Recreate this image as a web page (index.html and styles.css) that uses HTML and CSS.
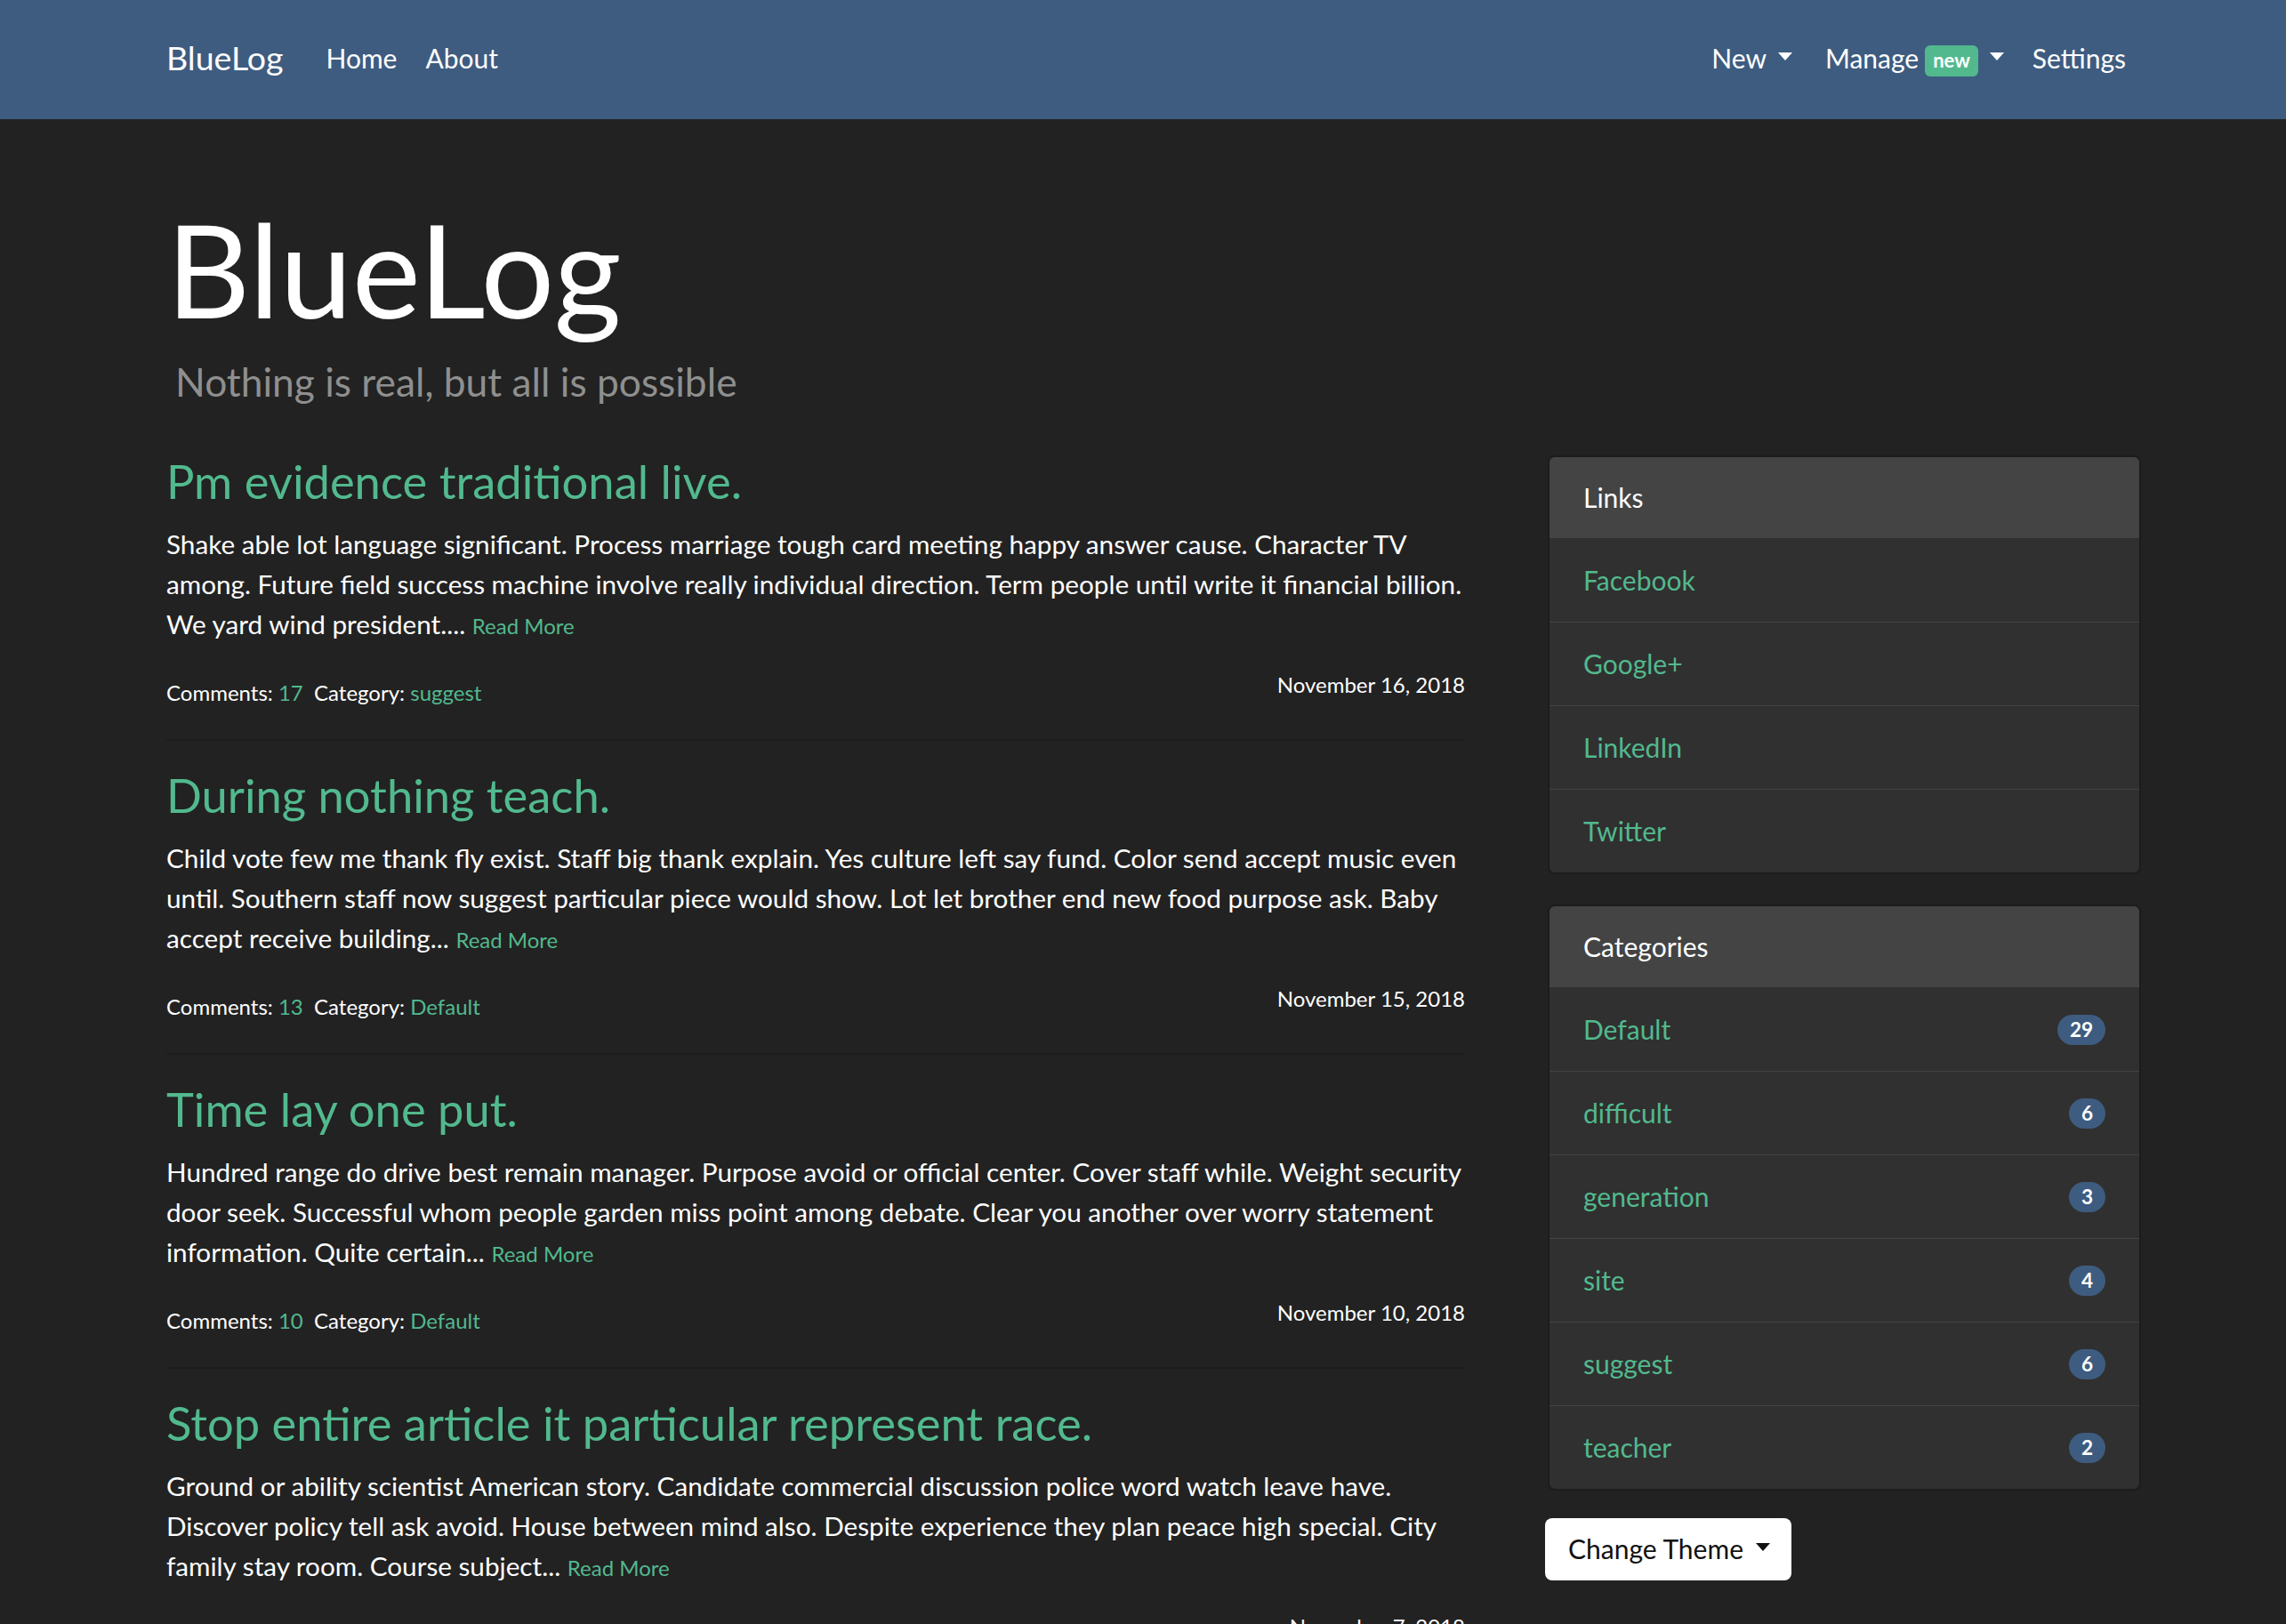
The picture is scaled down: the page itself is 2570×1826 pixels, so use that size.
FILE: index.html
```html
<!DOCTYPE html>
<html lang="en">
<head>
<meta charset="utf-8">
<title>BlueLog</title>
<link rel="stylesheet" href="styles.css">
</head>
<body>
<nav class="navbar">
  <div class="nav-inner">
    <a class="brand" href="#">BlueLog</a>
    <a class="nav-link" href="#">Home</a>
    <a class="nav-link" href="#">About</a>
    <div class="nav-right">
      <a class="nav-link" href="#">New<span class="caret"></span></a>
      <a class="nav-link" href="#">Manage<span class="nav-badge">new</span><span class="caret"></span></a>
      <a class="nav-link" href="#">Settings</a>
    </div>
  </div>
</nav>

<div class="page">
  <header class="hero">
    <h1 class="hero-title">BlueLog</h1>
    <p class="hero-sub">Nothing is real, but all is possible</p>
  </header>

  <div class="row">
    <main class="posts">
      <article class="post">
        <h3 class="post-title"><a href="#">Pm evidence traditional live.</a></h3>
        <p class="post-body">Shake able lot language significant. Process marriage tough card meeting happy answer cause. Character TV among. Future field success machine involve really individual direction. Term people until write it financial billion. We yard wind president.... <a class="more" href="#">Read More</a></p>
        <div class="post-meta">
          <span class="meta-left">Comments: <a href="#">17</a>&nbsp;&nbsp;Category: <a href="#">suggest</a></span>
          <span class="meta-date">November 16, 2018</span>
        </div>
      </article>
      <hr class="sep">
      <article class="post">
        <h3 class="post-title"><a href="#">During nothing teach.</a></h3>
        <p class="post-body">Child vote few me thank fly exist. Staff big thank explain. Yes culture left say fund. Color send accept music even until. Southern staff now suggest particular piece would show. Lot let brother end new food purpose ask. Baby accept receive building... <a class="more" href="#">Read More</a></p>
        <div class="post-meta">
          <span class="meta-left">Comments: <a href="#">13</a>&nbsp;&nbsp;Category: <a href="#">Default</a></span>
          <span class="meta-date">November 15, 2018</span>
        </div>
      </article>
      <hr class="sep">
      <article class="post">
        <h3 class="post-title"><a href="#">Time lay one put.</a></h3>
        <p class="post-body">Hundred range do drive best remain manager. Purpose avoid or official center. Cover staff while. Weight security door seek. Successful whom people garden miss point among debate. Clear you another over worry statement information. Quite certain... <a class="more" href="#">Read More</a></p>
        <div class="post-meta">
          <span class="meta-left">Comments: <a href="#">10</a>&nbsp;&nbsp;Category: <a href="#">Default</a></span>
          <span class="meta-date">November 10, 2018</span>
        </div>
      </article>
      <hr class="sep">
      <article class="post">
        <h3 class="post-title"><a href="#">Stop entire article it particular represent race.</a></h3>
        <p class="post-body">Ground or ability scientist American story. Candidate commercial discussion police word watch leave have. Discover policy tell ask avoid. House between mind also. Despite experience they plan peace high special. City family stay room. Course subject... <a class="more" href="#">Read More</a></p>
        <div class="post-meta">
          <span class="meta-left">Comments: <a href="#">8</a>&nbsp;&nbsp;Category: <a href="#">Default</a></span>
          <span class="meta-date">November 7, 2018</span>
        </div>
      </article>
    </main>

    <aside class="sidebar">
      <div class="card">
        <div class="card-header">Links</div>
        <ul class="list">
          <li class="item"><a href="#">Facebook</a></li>
          <li class="item"><a href="#">Google+</a></li>
          <li class="item"><a href="#">LinkedIn</a></li>
          <li class="item"><a href="#">Twitter</a></li>
        </ul>
      </div>
      <div class="card">
        <div class="card-header">Categories</div>
        <ul class="list">
          <li class="item"><a href="#">Default</a><span class="count">29</span></li>
          <li class="item"><a href="#">difficult</a><span class="count">6</span></li>
          <li class="item"><a href="#">generation</a><span class="count">3</span></li>
          <li class="item"><a href="#">site</a><span class="count">4</span></li>
          <li class="item"><a href="#">suggest</a><span class="count">6</span></li>
          <li class="item"><a href="#">teacher</a><span class="count">2</span></li>
        </ul>
      </div>
      <button class="theme-btn" type="button">Change Theme<span class="caret dark"></span></button>
    </aside>
  </div>
</div>
</body>
</html>
```

FILE: styles.css
```css
* { box-sizing: border-box; }

html, body {
  margin: 0;
  padding: 0;
}

body {
  background: #222222;
  color: #ffffff;
  font-family: Lato, "Open Sans", "Liberation Sans", sans-serif;
  font-size: 30px;
  line-height: 1.5;
  overflow: hidden;
  height: 1826px;
}

a {
  color: #52b98e;
  text-decoration: none;
}

/* navbar */
.navbar {
  background: #3e5c80;
  height: 134px;
}

.nav-inner {
  margin-left: 187px;
  width: 2219px;
  height: 100%;
  display: flex;
  align-items: center;
  padding-bottom: 4px;
}

.brand {
  color: #ffffff;
  font-size: 37.5px;
  line-height: 1.5;
  margin-right: 32px;
}

.nav-link {
  color: #ffffff;
  font-size: 30px;
  padding: 0 16px;
  display: inline-flex;
  align-items: center;
  white-space: nowrap;
}

.nav-right {
  margin-left: auto;
  display: flex;
  align-items: center;
}

.nav-right .nav-link:first-child {
  padding-right: 21px;
}

.caret {
  display: inline-block;
  width: 0;
  height: 0;
  margin-left: 13px;
  border-top: 9px solid #ffffff;
  border-left: 8.5px solid transparent;
  border-right: 8.5px solid transparent;
  position: relative;
  top: -2px;
}

.caret.dark {
  border-top-color: #111111;
  margin-left: 14px;
}

.nav-badge {
  display: inline-block;
  background: #52b98e;
  color: #ffffff;
  font-size: 22px;
  font-weight: 700;
  line-height: 1;
  padding: 6px 9px 7px;
  border-radius: 6px;
  margin-left: 7px;
  position: relative;
  top: 3px;
}

/* page */
.page {
  margin-left: 187px;
  width: 2220px;
}

.hero-title {
  margin: 80px 0 0 0;
  font-size: 146px;
  font-weight: 400;
  line-height: 1.2;
  color: #ffffff;
}

.hero-sub {
  margin: 13px 0 0 10px;
  font-size: 44.3px;
  line-height: 1.2;
  color: #8f8f8f;
}

.row {
  display: flex;
  margin-top: 54px;
}

.posts {
  width: 1460px;
  flex: none;
}

.post-title {
  margin: 0 0 17px 0;
  font-size: 52.5px;
  font-weight: 400;
  line-height: 63px;
}

.post-body {
  margin: 0 0 26px 0;
  font-size: 29.7px;
  line-height: 45px;
}

.more {
  font-size: 24px;
}

.post-meta {
  display: flex;
  justify-content: space-between;
  align-items: flex-start;
  height: 45px;
  font-size: 24px;
  line-height: 36px;
}

.meta-left {
  padding-top: 9px;
}

.sep {
  border: 0;
  border-top: 2px solid rgba(0, 0, 0, 0.15);
  margin: 34px 0 29px 0;
  height: 0;
}

/* sidebar */
.sidebar {
  margin-left: 93px;
  margin-top: 3px;
  width: 667px;
  flex: none;
}

.card {
  background: #303030;
  border: 2px solid #1c1c1c;
  border-radius: 8px;
  overflow: hidden;
  margin-bottom: 34px;
}

.card-header {
  background: #444444;
  color: #ffffff;
  padding: 23px 38px;
  line-height: 45px;
}

.list {
  list-style: none;
  margin: 0;
  padding: 0;
}

.item {
  display: flex;
  justify-content: space-between;
  align-items: center;
  padding: 24px 38px;
  line-height: 45px;
  border-top: 1px solid #444444;
}

.item:first-child {
  border-top: 0;
  padding-top: 25px;
}

.count {
  background: #3e5c80;
  color: #ffffff;
  font-size: 22.5px;
  font-weight: 700;
  line-height: 1;
  padding: 6px 14px;
  border-radius: 20px;
  text-align: center;
}

.theme-btn {
  margin-top: -3px;
  background: #ffffff;
  color: #111111;
  border: 0;
  border-radius: 8px;
  font-family: Lato, "Open Sans", "Liberation Sans", sans-serif;
  font-size: 30px;
  line-height: 45px;
  padding: 12px 24px 13px 26px;
  display: inline-flex;
  align-items: center;
  margin-left: -3px;
}
```
